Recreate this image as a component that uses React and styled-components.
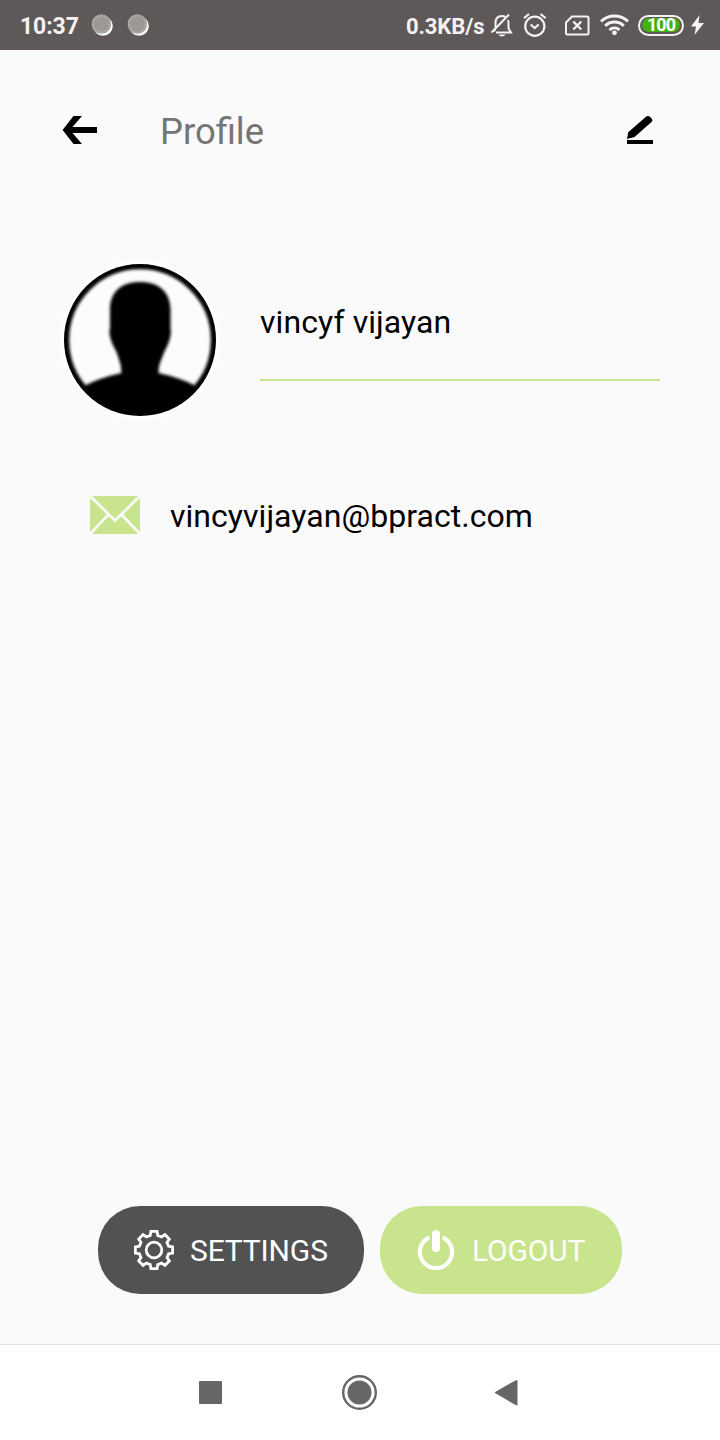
import React from 'react';
import styled, { createGlobalStyle } from 'styled-components';

const GlobalStyle = createGlobalStyle`
  * {
    box-sizing: border-box;
  }

  body {
    margin: 0;
    font-family: Roboto, "Noto Sans", sans-serif;
    background-color: #fafafa;
  }

  svg {
    display: block;
    flex: none;
  }
`;

const Screen = styled.div`
  display: flex;
  flex-direction: column;
  width: 720px;
  height: 1440px;
  background-color: #fafafa;
  color: #000000;
`;

const StatusBar = styled.header`
  display: flex;
  align-items: center;
  justify-content: space-between;
  height: 50px;
  padding: 0 15px 0 20px;
  background-color: #5e5958;
  color: #f5f2f1;
`;

const StatusGroup = styled.div`
  display: flex;
  align-items: center;
`;

const StatusText = styled.span`
  width: ${props => props.$width}px;
  font-size: ${props => props.$size}px;
  font-weight: 700;
  line-height: 50px;
  letter-spacing: -0.1px;
  white-space: nowrap;
  padding-top: 3px;
`;

const StatusIcon = styled.svg`
  margin-left: ${props => props.$gap || 0}px;
`;

const Battery = styled.div`
  display: flex;
  align-items: center;
  justify-content: center;
  width: 46px;
  height: 21px;
  margin: 0 6px 0 9px;
  border: 2px solid #f5f2f1;
  border-radius: 11px;
  background-color: #5e5958;
`;

const BatteryLevel = styled.span`
  width: 38px;
  height: 14px;
  border-radius: 7px;
  background-color: #43b010;
  color: #ffffff;
  font-size: 18px;
  font-weight: 700;
  line-height: 14px;
  text-align: center;
  letter-spacing: -1px;
`;

const Toolbar = styled.div`
  display: flex;
  align-items: center;
  height: 160px;
  padding: 0 66px 0 62px;
`;

const Title = styled.h1`
  flex: 1;
  margin: 3px 0 0 62px;
  color: #757575;
  font-size: 36.4px;
  font-weight: 400;
  line-height: 42px;
`;

const ProfileRow = styled.section`
  display: flex;
  margin-top: 50px;
  padding: 0 60px;
`;

const NameField = styled.div`
  flex: 1;
  height: 121px;
  margin-left: 40px;
  padding-top: 43px;
  border-bottom: 2px solid #c8e48c;
  font-size: 32px;
  line-height: 38px;
  letter-spacing: 0.08px;
`;

const EmailRow = styled.div`
  display: flex;
  align-items: center;
  gap: 30px;
  height: 50px;
  margin-top: 70px;
  padding-left: 90px;
  font-size: 32px;
`;

const EmailText = styled.span`
  padding-top: 2px;
  letter-spacing: 0.04px;
`;

const Actions = styled.div`
  display: flex;
  justify-content: center;
  gap: 16px;
  margin: auto 0 50px;
`;

const ActionButton = styled.button`
  display: flex;
  align-items: center;
  gap: 16px;
  width: ${props => props.$width}px;
  height: 88px;
  padding: 0 0 0 36px;
  border: none;
  border-radius: 42px;
  background-color: ${props => props.$color};
  color: #ffffff;
  font-family: inherit;
  font-size: 30px;
  letter-spacing: -0.15px;
  white-space: nowrap;
`;

const NavBar = styled.nav`
  display: flex;
  align-items: center;
  justify-content: center;
  gap: 115px;
  height: 96px;
  border-top: 1px solid #e2e2e2;
  background-color: #ffffff;
`;

const Coin = ({ gap }) => (
  <StatusIcon $gap={gap} width="22" height="22" viewBox="0 0 22 22">
    <circle cx="12" cy="12" r="9.8" fill="#fffdfb" />
    <circle cx="10.3" cy="10" r="9.8" fill="#9c9896" />
    <circle cx="10.3" cy="10" r="8.4" fill="none" stroke="#bdb9b6" strokeWidth="1.8" strokeDasharray="1.2 1.6" />
  </StatusIcon>
);

const gearPath = () => {
  const points = [];
  for (let i = 0; i < 8; i++) {
    const a = (i * Math.PI) / 4;
    [[-3.8, -14.6], [-3.1, -18.6], [3.1, -18.6], [3.8, -14.6]].forEach(([x, y]) => {
      const px = 20 + x * Math.cos(a) - y * Math.sin(a);
      const py = 20 + x * Math.sin(a) + y * Math.cos(a);
      points.push(`${px.toFixed(2)} ${py.toFixed(2)}`);
    });
  }
  return `M${points.join('L')}Z`;
};

const App = () => {
  return (
    <Screen>
      <GlobalStyle />
      <StatusBar>
        <StatusGroup>
          <StatusText $width={58} $size={23}>10:37</StatusText>
          <Coin gap={13} />
          <Coin gap={14} />
        </StatusGroup>
        <StatusGroup>
          <StatusText $width={84} $size={22}>0.3KB/s</StatusText>
          <StatusIcon width="24" height="26" viewBox="0 0 24 26" fill="none" stroke="#f5f2f1" strokeWidth="2">
            <path d="M4 19.5 5.5 16.500V11C5.500 6.500 8 4 12 4c1.300 0 2.400.3 3.300.9M18 8c.3.900.5 1.900.5 3v5.500l2.500 4H6M1.500 20.500 19 2.500" />
            <path d="M8.500 22.500h7c-.7 1.300-1.900 2-3.500 2s-2.800-.7-3.500-2Z" fill="#f5f2f1" stroke="none" />
          </StatusIcon>
          <StatusIcon $gap={9} width="24" height="26" viewBox="0 0 24 26" fill="none" stroke="#f5f2f1" strokeWidth="2.200">
            <circle cx="11.800" cy="14.300" r="9.600" />
            <path d="M1 6.200 6 2M22.600 6.200 17.600 2M7.700 12.500l4 3.500 4-3.500" />
          </StatusIcon>
          <StatusIcon $gap={18} width="25" height="21" viewBox="0 0 25 21" fill="none" stroke="#f5f2f1" strokeWidth="2">
            <path d="M7 1.500H22q1.500 0 1.500 1.500V18q0 1.500-1.500 1.500H2.500Q1 19.500 1 18V7.500Z" />
            <path d="m8.300 6.500 8 8m0-8-8 8" strokeWidth="2.300" />
          </StatusIcon>
          <StatusIcon $gap={10} width="29" height="22" viewBox="0 0 29 22" fill="none" stroke="#f5f2f1" strokeWidth="3">
            <path d="M1 7.500C8.500.2 20.500.2 28 7.500M5.200 11.800c5.300-5 13.300-5 18.600 0M9.500 16c3-2.700 7-2.700 10 0" />
            <circle cx="14.500" cy="18.800" r="2.400" fill="#f5f2f1" stroke="none" />
          </StatusIcon>
          <Battery>
            <BatteryLevel>100</BatteryLevel>
          </Battery>
          <StatusIcon width="15" height="22" viewBox="0 0 15 22">
            <path d="M9.500 1 1 12.500h5L4.500 21 14 9H8.500Z" fill="#f5f2f1" />
          </StatusIcon>
        </StatusGroup>
      </StatusBar>

      <Toolbar>
        <svg width="36" height="30" viewBox="0 0 36 30">
          <path d="M.6 15 11.500 1H20l-9.500 11H35v6H10.500L20 29h-8.500Z" />
        </svg>
        <Title>Profile</Title>
        <svg width="28" height="30" viewBox="0 0 28 30">
          <path d="M1 24 2.200 17.300 20 1.800q2-1.800 4 0l2 2.200q1.200 1.500-.5 3L8.500 22Z" />
          <path d="M1 25h26v4H1Z" />
        </svg>
      </Toolbar>

      <ProfileRow>
        <svg width="160" height="160" viewBox="0 0 160 160">
          <defs>
            <clipPath id="face">
              <circle cx="80" cy="80" r="76" />
            </clipPath>
            <filter id="soften">
              <feGaussianBlur stdDeviation="1.4" />
            </filter>
          </defs>
          <circle cx="80" cy="80" r="80" fill="#fdfdfd" />
          <g clipPath="url(#face)">
            <circle cx="80" cy="80" r="76" fill="#fcfcfc" />
            <g filter="url(#soften)">
              <circle cx="80" cy="80" r="75.500" fill="none" stroke="#000" strokeWidth="9.500" />
              <path d="M80 22C61 22 50 32 50 50V68Q48.500 73 51 80C53 87 57 91 58.500 98Q61.500 105 61.500 113Q39 118 24 126L15 170H145L136 126Q121 118 98.500 113Q98.500 105 102 98C104 91 108 86 109.800 79Q111.500 73 110.500 68V50C110.500 32 99 22 80 22Z" />
            </g>
          </g>
        </svg>
        <NameField>vincyf vijayan</NameField>
      </ProfileRow>

      <EmailRow>
        <svg width="50" height="38" viewBox="0 0 50 38">
          <path d="M0 0h50v38H0Z" fill="#c8e48c" />
          <path d="M0 0 25 24.500 50 0M0 38 18.500 18.500M50 38 31.500 18.500" fill="none" stroke="#fafafa" strokeWidth="2.800" />
        </svg>
        <EmailText>vincyvijayan@bpract.com</EmailText>
      </EmailRow>

      <Actions>
        <ActionButton $width={266} $color="#525252">
          <svg width="40" height="40" viewBox="0 0 40 40" fill="none" stroke="#fff" strokeWidth="2.800">
            <path d={gearPath()} />
            <circle cx="20" cy="20" r="7.800" />
          </svg>
          SETTINGS
        </ActionButton>
        <ActionButton $width={242} $color="#c8e48c">
          <svg width="40" height="40" viewBox="0 0 40 40" fill="none" stroke="#fff">
            <path d="M13.200 7.400a16.100 16.100 0 1 0 13.600 0" strokeWidth="4.200" />
            <path d="M20 4v14" strokeWidth="8" strokeLinecap="round" />
          </svg>
          LOGOUT
        </ActionButton>
      </Actions>

      <NavBar>
        <svg width="36" height="36" viewBox="0 0 36 36">
          <rect x="8" y="6" width="23" height="23" rx="1" fill="#666" />
        </svg>
        <svg width="36" height="36" viewBox="0 0 36 36">
          <circle cx="17.500" cy="17.500" r="16.300" fill="none" stroke="#666" strokeWidth="2.400" />
          <circle cx="17.500" cy="17.500" r="12" fill="#666" />
        </svg>
        <svg width="36" height="36" viewBox="0 0 36 36">
          <path d="M3 17.500 23.500 6v23.500Z" fill="#666" stroke="#666" strokeWidth="2" strokeLinejoin="round" />
        </svg>
      </NavBar>
    </Screen>
  );
};

export default App;
